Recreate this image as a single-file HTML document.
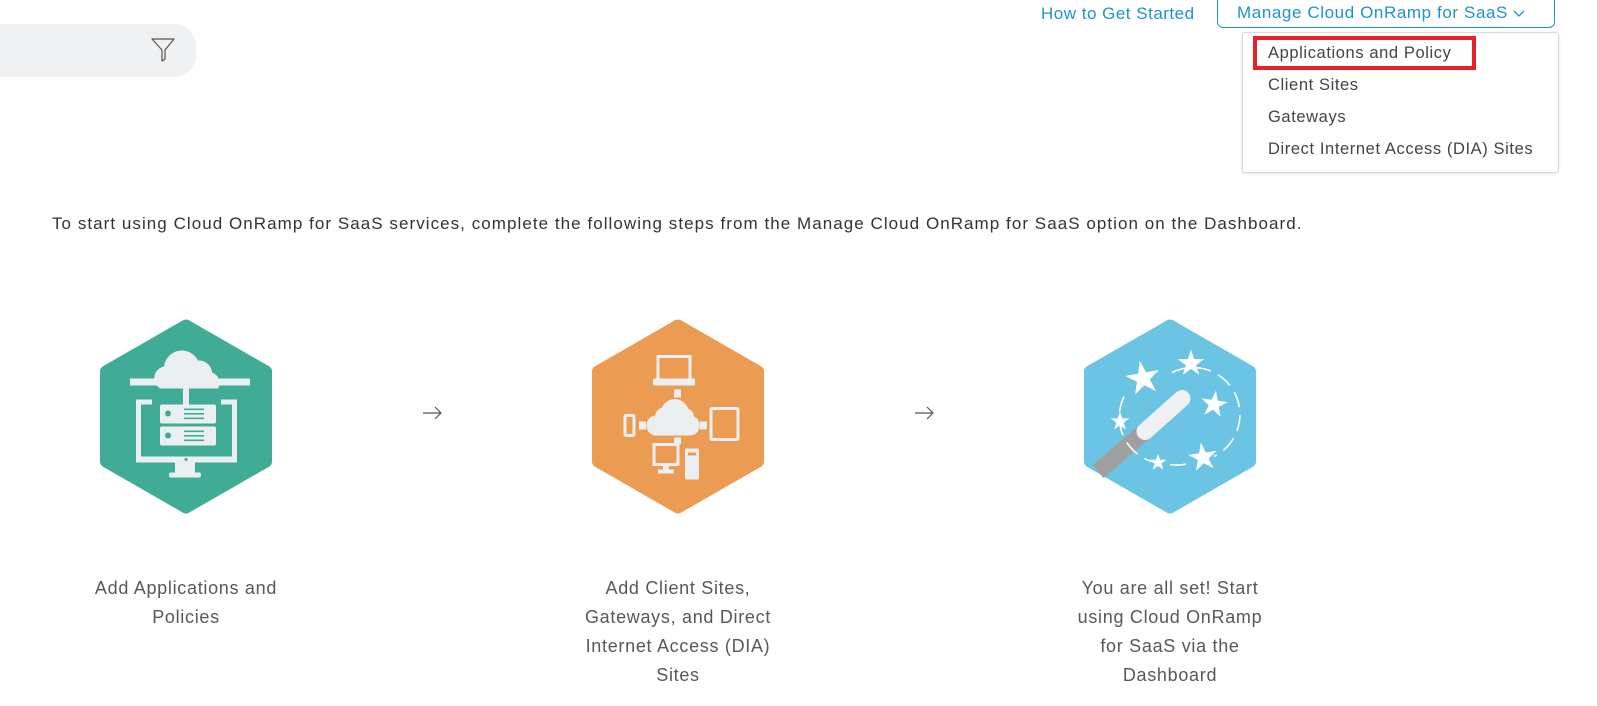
<!DOCTYPE html>
<html><head><meta charset="utf-8"><style>
body{margin:0;width:1597px;height:706px;background:#fff;font-family:"Liberation Sans",sans-serif;position:relative;overflow:hidden}
.a{position:absolute}
.lbl{position:absolute;width:210px;text-align:center;font-size:18px;line-height:29px;color:#58585b;letter-spacing:0.7px}
</style></head><body>
<div class="a" style="left:-20px;top:24px;width:216px;height:53px;background:#f0f1f3;border-radius:22px"></div>
<svg class="a" style="left:150px;top:37px" width="26" height="26" viewBox="0 0 26 26"><path d="M2 2H24L15 13V22L12 24V13Z" fill="none" stroke="#555" stroke-width="1.2" stroke-linejoin="round"/></svg>
<div class="a" style="left:1041px;top:4px;font-size:17px;color:#1e93d0;letter-spacing:0.5px">How to Get Started</div>
<div class="a" style="left:1217px;top:-3px;width:338px;height:31px;border:1px solid #1e93d0;border-radius:0 0 6px 6px;box-sizing:border-box"></div>
<div class="a" style="left:1237px;top:3px;font-size:17px;color:#1e93d0;letter-spacing:0.6px;white-space:nowrap">Manage Cloud OnRamp for SaaS <svg width="12" height="10" viewBox="0 0 12 10"><path d="M1 3L6 8L11 3" fill="none" stroke="#1e93d0" stroke-width="1.3"/></svg></div>
<div class="a" style="left:1242px;top:32px;width:317px;height:141px;border:1px solid #d8d8d8;border-radius:3px;background:#fff;box-sizing:border-box;box-shadow:0 1px 3px rgba(0,0,0,.1)"></div>
<div class="a" style="left:1253px;top:36px;width:223px;height:34px;border:4px solid #e8202a;box-sizing:border-box"></div>
<div class="a" style="left:1268px;top:37px;font-size:16.5px;color:#444;line-height:32px;letter-spacing:0.6px;white-space:nowrap">Applications and Policy<br>Client Sites<br>Gateways<br>Direct Internet Access (DIA) Sites</div>
<div class="a" style="left:52px;top:214px;font-size:17px;color:#333;letter-spacing:1.05px;white-space:nowrap">To start using Cloud OnRamp for SaaS services, complete the following steps from the Manage Cloud OnRamp for SaaS option on the Dashboard.</div>

<svg class="a" style="left:0;top:300px" width="1597" height="230">
<defs><path id="hx" d="M0 -91L80 -45V45L0 91L-80 45V-45Z" stroke-width="12" stroke-linejoin="round"/>
<polygon id="st" points="0,-1 0.225,-0.309 0.951,-0.309 0.363,0.118 0.588,0.809 0,0.382 -0.588,0.809 -0.363,0.118 -0.951,-0.309 -0.225,-0.309"/></defs>
<g transform="translate(186,116.5)"><use href="#hx" fill="#40ac96" stroke="#40ac96"/>
<g fill="#eceff1">
<rect x="-56" y="-38" width="120" height="7"/>
<path d="M-26 -28a12 12 0 0 1 4 -22a18 18 0 0 1 34 -6a13 13 0 0 1 14 12a11 11 0 0 1 6 16z"/>
<rect x="-3" y="-30" width="6" height="18"/>
<path d="M-50 -17h16v5h-11v52h91v-52h-11v-5h16v63h-101z"/>
<rect x="-11" y="46" width="20" height="12"/><rect x="-17" y="56" width="32" height="5" rx="2"/>
<rect x="-26" y="-12" width="56" height="19" rx="2"/><rect x="-26" y="10" width="56" height="19" rx="2"/>
</g>
<g fill="#40ac96"><circle cx="-18" cy="-3" r="3"/><circle cx="-18" cy="19" r="3"/>
<rect x="-2" y="-8" width="20" height="1.6"/><rect x="-2" y="-3.5" width="20" height="1.6"/><rect x="-2" y="1" width="20" height="1.6"/>
<rect x="-2" y="14" width="20" height="1.6"/><rect x="-2" y="18.5" width="20" height="1.6"/><rect x="-2" y="23" width="20" height="1.6"/>
<circle cx="0" cy="43" r="1.5"/></g></g>
<path d="M423 113H441M435 107L441 113L435 119" fill="none" stroke="#555" stroke-width="1.2"/>
<path d="M915 113H933M927 107L933 113L927 119" fill="none" stroke="#555" stroke-width="1.2"/>
<g transform="translate(678,116.5)"><use href="#hx" fill="#ec9b53" stroke="#ec9b53"/>
<g fill="none" stroke="#eceff1" stroke-width="3">
<rect x="-20" y="-60" width="32" height="24"/><rect x="-53" y="-1" width="9" height="20" rx="1"/><rect x="33" y="-8" width="27" height="31" rx="1"/>
<rect x="-24" y="28" width="24" height="20"/></g>
<g fill="#eceff1"><rect x="-25" y="-38" width="42" height="7" rx="1"/>
<rect x="-4" y="-27" width="7" height="8"/><rect x="-4" y="21" width="7" height="7"/>
<rect x="-39" y="5" width="7" height="8"/><rect x="22" y="5" width="7" height="8"/>
<path d="M-20 19a10 10 0 0 1 -3 -20a10 10 0 0 1 7 -8a14 14 0 0 1 26 1a10 10 0 0 1 6 8a10 10 0 0 1 -3 19z"/>
<rect x="-15" y="48" width="6" height="6"/><rect x="-20" y="53" width="16" height="4"/>
<rect x="7" y="32" width="14" height="31" rx="2"/></g>
<rect x="10" y="36" width="8" height="3" fill="#ec9b53"/></g>
<g transform="translate(1170,116.5)"><use href="#hx" fill="#6cc4e4" stroke="#6cc4e4"/>
<path d="M-72 55L-25 15" stroke="#a0a0a0" stroke-width="17"/>
<path d="M-25 15L12 -18" stroke="#eff1f2" stroke-width="17" stroke-linecap="round"/>
<g fill="none" stroke="#fff" stroke-width="1.6" stroke-dasharray="16 8"><path d="M2 -44A45 45 0 0 1 44 40"/><path d="M-46 -20A47 47 0 0 0 -10 47"/><path d="M0 48A45 45 0 0 0 22 46"/></g>
<g fill="#fff">
<use href="#st" transform="translate(-27,-38) rotate(-10) scale(18)"/>
<use href="#st" transform="translate(21,-53) scale(14)"/>
<use href="#st" transform="translate(44,-12) rotate(8) scale(14)"/>
<use href="#st" transform="translate(-50,5) scale(10)"/>
<use href="#st" transform="translate(33,41) rotate(-8) scale(15)"/>
<use href="#st" transform="translate(-12,46) scale(9)"/>
</g></g>
</svg>

<div class="lbl" style="left:81px;top:574px">Add Applications and Policies</div>
<div class="lbl" style="left:573px;top:574px">Add Client Sites, Gateways, and Direct Internet Access (DIA) Sites</div>
<div class="lbl" style="left:1065px;top:574px">You are all set! Start using Cloud OnRamp for SaaS via the Dashboard</div>
</body></html>
